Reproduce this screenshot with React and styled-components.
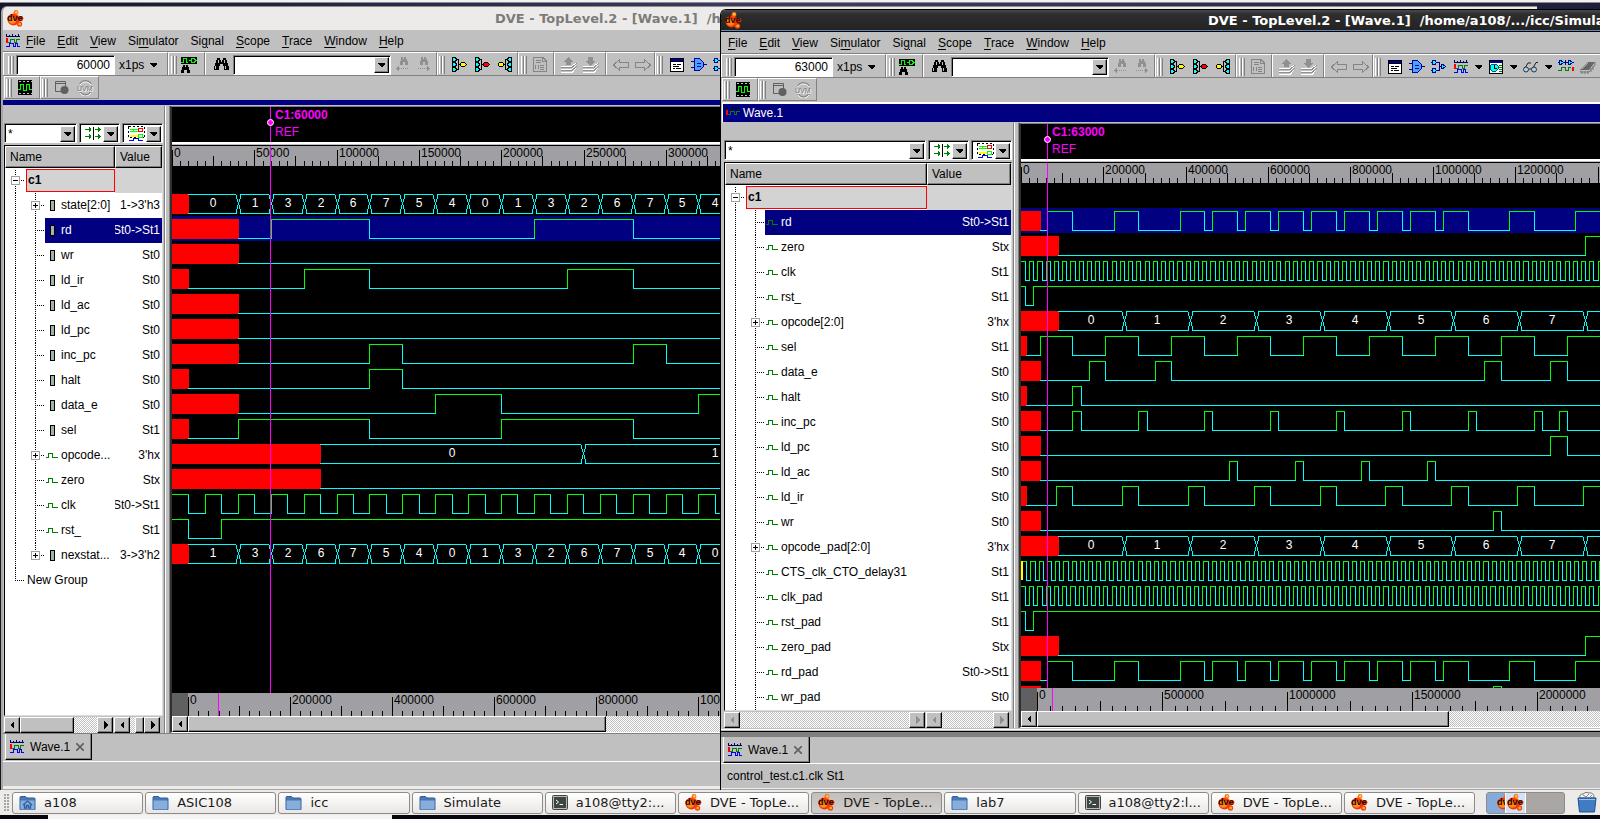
import React from "react";
import styled, { createGlobalStyle, css } from "styled-components";

const GlobalStyle = createGlobalStyle`
  *, *::before, *::after { box-sizing: border-box; }
  html, body { margin: 0; height: 100%; }
  body { background: #0a0c1c; overflow: hidden; font-family: "Liberation Sans", Arial, sans-serif; font-size: 12px; line-height: 16px; color: #000; }
  button, input, select { font: inherit; color: inherit; margin: 0; padding: 0; border: 0; border-radius: 0; background: none; }
  svg { display: block; flex: none; }
`;

/* ---------- desktop ---------- */
const Desktop = styled.div`
  display: flex;
  flex-direction: column;
  height: 100vh;
  overflow: hidden;
`;
const TopPanelEdge = styled.div`
  height: 3px;
  flex: none;
  background: #f4f2f1;
  border-bottom: 1px solid #8d8a88;
`;
const Stage = styled.div`
  position: relative;
  flex: 1;
  min-height: 0;
  background: linear-gradient(90deg, #14162c, #3b3d66 50%, #1e1f3d);
`;
const Window = styled.section`
  position: absolute;
  bottom: 0;
  display: flex;
  flex-direction: column;
  overflow: hidden;
  background: #c0c0c0;
  border-radius: 6px 0 0 0;
  ${(p) =>
    p.$active
      ? css`
          top: 6px;
          left: 45%;
          right: 0;
          border-left: 1px solid #000;
          border-top: 1px solid #000;
        `
      : css`
          top: 3px;
          left: 1px;
          width: 96%;
          border-left: 2px solid #a9a6a4;
          border-top: 1px solid #8f8d8b;
        `}
`;
const TitleBar = styled.header`
  display: flex;
  align-items: center;
  flex: none;
  padding-left: 4px;
  white-space: pre;
  font: bold 13px/16px "DejaVu Sans", sans-serif;
  ${(p) =>
    p.$active
      ? css`
          height: 22px;
          gap: 466px;
          color: #fff;
          background: linear-gradient(#4a4a4a, #2e2e2e 20%, #222);
          border-bottom: 1px solid #000;
          box-shadow: inset 0 -1px 0 #5f87b8;
        `
      : css`
          height: 23px;
          gap: 471px;
          color: #7c7b79;
          background: #edebe9;
        `}
`;
const MenuBar = styled.nav`
  display: flex;
  align-items: center;
  flex: none;
  height: 22px;
  padding-left: ${(p) => (p.$icon ? 3 : 1)}px;
  border-bottom: 1px solid #808080;
`;
const MenuButton = styled.button`
  padding: 0 6px;
  height: 20px;
  u { text-underline-offset: 2px; }
`;

/* ---------- toolbars ---------- */
const ToolRow = styled.div`
  display: flex;
  flex: none;
  height: 24px;
  overflow: hidden;
  padding-left: ${(p) => p.$inset || 0}px;
  border-bottom: ${(p) => (p.$line ? "1px solid #808080" : "0")};
`;
const Segment = styled.div`
  display: flex;
  align-items: center;
  flex: none;
  width: ${(p) => (p.$w ? p.$w + "px" : "auto")};
  height: 23px;
  gap: ${(p) => p.$gap || 4}px;
  padding-top: ${(p) => (p.$boxed ? 0 : 1)}px;
  padding-left: ${(p) => (p.$pad === undefined ? 2 : p.$pad)}px;
  border-left: 1px solid #fff;
  border-top: 1px solid #fff;
  border-right: 1px solid #808080;
  border-bottom: ${(p) => (p.$boxed ? "1px solid #808080" : "0")};
`;
const Handle = styled.span`
  flex: none;
  width: 6px;
  height: 18px;
  background: linear-gradient(90deg, #fff 1px, #c0c0c0 1px 2px, #808080 2px 3px, #fff 3px 4px, #c0c0c0 4px 5px, #808080 5px);
`;
const ToolButton = styled.button`
  display: flex;
  align-items: center;
  justify-content: center;
  flex: none;
  width: ${(p) => p.$w || 16}px;
  height: 20px;
`;
const Sunken = css`
  background: #fff;
  border: 1px solid #808080;
  border-right-color: #fff;
  border-bottom-color: #fff;
  box-shadow: inset 1px 1px 0 #000;
`;
const TimeInput = styled.input`
  ${Sunken};
  width: 99px;
  height: 20px;
  padding-right: 4px;
  text-align: right;
`;
const UnitSelect = styled.select`
  appearance: none;
  width: 26px;
  margin-left: 2px;
  outline: 0;
`;
const ComboBox = styled.span`
  ${Sunken};
  display: flex;
  align-items: center;
  flex: ${(p) => (p.$w ? "none" : "1")};
  width: ${(p) => (p.$w ? p.$w + "px" : "auto")};
  min-width: 0;
  height: 20px;
  padding: 1px 1px 0 3px;
`;
const ComboInput = styled.input`
  flex: 1;
  min-width: 0;
  width: 0;
  outline: 0;
  background: transparent;
`;
const ComboFace = styled.button`
  flex: 1;
  display: flex;
  justify-content: center;
`;
const ArrowButton = styled.button`
  display: flex;
  align-items: center;
  justify-content: center;
  flex: none;
  width: 15px;
  height: 16px;
  background: #c0c0c0;
  border: 1px solid #fff;
  border-right: 1px solid #000;
  border-bottom: 1px solid #000;
  box-shadow: inset -1px -1px 0 #808080;
`;

/* ---------- document window ---------- */
const DocTitle = styled.div`
  display: flex;
  align-items: center;
  flex: none;
  gap: 3px;
  padding-left: 3px;
  color: #fff;
  background: #000080;
  ${(p) =>
    p.$full
      ? css`
          height: 21px;
          margin-left: 1px;
          border-top: 2px solid #fff;
          border-left: 1px solid #fff;
          border-bottom: 1px solid #c0c0c0;
        `
      : css`
          height: 6px;
          border-bottom: 1px solid #c0c0c0;
        `}
`;
const Panel = styled.div`
  display: flex;
  flex: 1;
  min-height: 0;
  padding-left: ${(p) => p.$inset}px;
`;
const SignalPane = styled.div`
  display: flex;
  flex-direction: column;
  flex: none;
  width: ${(p) => p.$w}px;
`;
const FilterRow = styled.div`
  display: flex;
  flex: none;
  gap: 2px;
  height: 39px;
  padding-top: 17px;
`;
const SignalList = styled.div`
  flex: 1;
  min-height: 0;
  overflow: hidden;
  background: #fff;
  border-left: 1px solid #000;
  border-top: 1px solid #000;
  border-right: 1px solid #dcdcdc;
  border-bottom: 1px solid #dcdcdc;
`;
const SignalTable = styled.table`
  width: 100%;
  table-layout: fixed;
  border-collapse: separate;
  border-spacing: 0;
  td { padding: 0; }
`;
const HeadCell = styled.th`
  height: 22px;
  padding: 0 0 0 4px;
  text-align: left;
  font-weight: normal;
  background: #c0c0c0;
  border: 1px solid #fff;
  border-right-color: #000;
  border-bottom-color: #000;
  box-shadow: inset -1px -1px 0 #808080;
`;
const NameCell = styled.div`
  display: flex;
  height: 25px;
  overflow: hidden;
  white-space: nowrap;
`;
const Guide = styled.span`
  position: relative;
  flex: none;
  width: 20px;
  &::before {
    content: "";
    position: absolute;
    left: 10px;
    top: ${(p) => (p.$start ? 2 : 0)}px;
    bottom: ${(p) => (p.$end ? 12 : 0)}px;
    border-left: ${(p) => (p.$through ? "1px dotted #000" : "0")};
  }
  &::after {
    content: "";
    position: absolute;
    left: 12px;
    top: 12px;
    width: 7px;
    border-top: ${(p) => (p.$branch ? "1px dotted #000" : "0")};
  }
`;
const Expander = styled.button`
  position: absolute;
  z-index: 1;
  left: 6px;
  top: 8px;
  width: 9px;
  height: 9px;
  background: linear-gradient(#000, #000) center / 5px 1px no-repeat,
    ${(p) => (p.$open ? "" : "linear-gradient(#000, #000) center / 1px 5px no-repeat,")} #fff;
  border: 1px solid #a0a0a0;
`;
const NameBody = styled.span`
  display: flex;
  align-items: center;
  flex: 1;
  min-width: 0;
  gap: 3px;
  padding: 0 0 2px 1px;
  color: ${(p) => (p.$selected ? "#fff" : "#000")};
  background: ${(p) => (p.$selected ? "#000080" : "transparent")};
`;
const IconSlot = styled.span`
  display: flex;
  justify-content: center;
  flex: none;
  width: 12px;
  padding-top: 2px;
`;
const ValueBody = styled.div`
  display: flex;
  align-items: center;
  justify-content: flex-end;
  height: 25px;
  padding: 0 2px 2px 0;
  overflow: hidden;
  white-space: nowrap;
  color: ${(p) => (p.$selected ? "#fff" : "#000")};
  background: ${(p) => (p.$selected ? "#000080" : p.$group ? "#d3d3d3" : "transparent")};
`;
const GroupName = styled.span`
  flex: 1;
  margin: 1px 0 1px 1px;
  padding-left: 1px;
  font-weight: bold;
  line-height: 20px;
  background: #d3d3d3;
  border: 1px solid #f00;
`;
const PlainGroup = styled.span`
  padding-left: 2px;
  line-height: 25px;
`;
const Splitter = styled.div`
  flex: none;
  width: 7px;
  background: linear-gradient(90deg, #c0c0c0 1px, #808080 1px 2px, #fff 2px 3px, #c0c0c0 3px 6px, #808080 6px);
`;

/* ---------- scroll bars ---------- */
const ScrollRow = styled.div`
  display: flex;
  flex: none;
  gap: 1px;
  height: 17px;
  padding: 1px 3px 0 0;
`;
const ScrollTrack = styled.div`
  display: flex;
  flex: ${(p) => (p.$w ? "none" : p.$fixed ? "none" : "1")};
  width: ${(p) => (p.$w ? p.$w + "px" : "auto")};
  min-width: 0;
  height: 16px;
  background: repeating-conic-gradient(#fff 0 25%, #c0c0c0 0 50%) 0 0 / 2px 2px;
`;
const ScrollButton = styled(ArrowButton)`
  width: 16px;
  margin-left: ${(p) => (p.$end ? "auto" : "0")};
`;
const Thumb = styled.span`
  flex: none;
  width: ${(p) => p.$w}px;
  margin-left: ${(p) => (p.$end ? "auto" : "0")};
  & + ${ScrollButton} { margin-left: ${(p) => (p.$end ? "0" : "auto")}; }
  background: #c0c0c0;
  border: 1px solid #fff;
  border-right-color: #000;
  border-bottom-color: #000;
  box-shadow: inset -1px -1px 0 #808080;
`;

/* ---------- waves ---------- */
const WavePane = styled.div`
  display: flex;
  flex-direction: column;
  flex: 1;
  min-width: 0;
  border-left: 2px solid #303030;
  border-top: 1px solid #808080;
  border-bottom: 1px solid #fff;
  background: #000;
`;
const MarkerStrip = styled.div`
  flex: none;
  height: 35px;
  overflow: hidden;
`;
const Divider = styled.div`
  flex: none;
  height: 4px;
  background: linear-gradient(#fff 2px, #c0c0c0 2px 3px, #000 3px);
`;
const RulerStrip = styled.div`
  flex: none;
  height: ${(p) => p.$h}px;
  overflow: hidden;
  background: #a0a0a4;
`;
const WaveCanvas = styled.div`
  flex: 1;
  min-height: 0;
  overflow: hidden;
`;
const Drawing = styled.svg`
  width: 100%;
  height: 100%;
  font: 12px "Liberation Sans", Arial, sans-serif;
`;

/* ---------- lower bars ---------- */
const PanelFoot = styled.div`
  flex: none;
  height: ${(p) => (p.$active ? 9 : 1)}px;
  background: ${(p) =>
    p.$active ? "linear-gradient(#c0c0c0 1px, #fff 1px 2px, #c0c0c0 2px 3px, #000 3px 4px, #808080 4px)" : "#808080"};
`;
const TabBar = styled.div`
  flex: none;
  height: ${(p) => (p.$active ? 26 : 27)}px;
  padding-left: 2px;
`;
const Tab = styled.button`
  display: flex;
  align-items: center;
  gap: 6px;
  width: 87px;
  height: 26px;
  padding-left: 4px;
  border-left: 1px solid #fff;
  border-right: 1px solid #000;
  border-bottom: 1px solid #000;
  box-shadow: inset -1px -1px 0 #808080;
`;
const StatusBar = styled.footer`
  flex: none;
  height: 25px;
  padding: 4px 0 0 6px;
  border-top: 1px solid #fff;
`;
const WindowFoot = styled.div`
  flex: none;
  height: ${(p) => (p.$active ? 2 : 4)}px;
  background: #edebe9;
  border-bottom: 1px solid #a9a6a4;
`;

/* ---------- task bar ---------- */
const TaskBar = styled.footer`
  display: flex;
  align-items: center;
  flex: none;
  height: 25px;
  padding: 0 3px 0 4px;
  background: #edebe9;
`;
const Grip = styled.span`
  flex: none;
  width: 6px;
  height: 17px;
  margin-right: 2px;
  background: radial-gradient(circle at 1px 1px, #a8a5a2 1px, transparent 1px) 0 0 / 3px 3px;
`;
const TaskList = styled.div`
  display: flex;
  flex: 1;
  min-width: 0;
  gap: 2px;
`;
const TaskButton = styled.button`
  display: flex;
  align-items: center;
  flex: 1 1 0;
  min-width: 0;
  gap: 8px;
  height: 22px;
  padding-left: 6px;
  overflow: hidden;
  white-space: nowrap;
  color: #1a1a1a;
  font: 13px/18px "DejaVu Sans", sans-serif;
  border: 1px solid #8f8b88;
  border-radius: 3px;
  background: ${(p) => (p.$active ? "linear-gradient(#c2bfbc, #d0cdca)" : "linear-gradient(#fff, #e9e7e5)")};
`;
const Pager = styled.div`
  display: flex;
  flex: none;
  width: 79px;
  height: 22px;
  margin: 0 12px 0 11px;
  overflow: hidden;
  border: 1px solid #8f8b88;
  border-radius: 3px;
  background: #aaa6a3;
`;
const PagerDesk = styled.button`
  display: flex;
  width: 39px;
  border-right: 1px solid #fff;
`;
const PagerPart = styled.span`
  display: flex;
  align-items: center;
  align-self: stretch;
  flex: ${(p) => (p.$behind ? "0 0 18px" : "1")};
  padding-left: ${(p) => (p.$behind ? 10 : 1)}px;
  overflow: hidden;
  background: ${(p) => (p.$behind ? "#86abd9" : "#d3e2f5")};
  border-left: ${(p) => (p.$behind ? "0" : "1px solid #fff")};
`;
const ScreenEdge = styled.div`
  flex: none;
  height: 4px;
  padding: 0 75.5% 0 3%;
  background: #05070d;
  &::before { content: ""; display: block; height: 4px; background: #f4f4f4; }
`;

/* ---------- icons ---------- */
const Pix = ({ w = 16, h = 16, children }) => (
  <svg width={w} height={h} viewBox={`0 0 ${w} ${h}`} shapeRendering="crispEdges" fill="none" aria-hidden="true">
    {children}
  </svg>
);
const DveIcon = () => (
  <svg width="17" height="17" viewBox="0 0 17 17" aria-hidden="true">
    <circle cx="6.5" cy="9.5" r="6" fill="#f5350a" />
    <circle cx="5.5" cy="10" r="3.8" fill="#ff8a14" />
    <circle cx="9" cy="2.5" r="2.4" fill="#ff6a10" />
    <circle cx="9.3" cy="2.2" r="1.2" fill="#ffd23c" />
    <circle cx="14" cy="8.5" r="2.4" fill="#f0300a" />
    <circle cx="12.5" cy="14" r="2.7" fill="#f5450a" />
    <circle cx="12.7" cy="14" r="1.3" fill="#ffb428" />
    <text x="0" y="11" fontSize="9" fontWeight="bold" fontFamily="Liberation Sans, sans-serif" fill="#2a0800">dve</text>
  </svg>
);
const WaveIcon = ({ dim }) => (
  <Pix w={14} h={14}>
    <path d="M0 2.5H14M.5 0V2M3.5 1V2M6.5 0V2M9.5 1V2M12.5 0V2" stroke={dim ? "#000050" : "#000060"} />
    <path d="M0 4H2V9H0z" fill="#f00" />
    <path d="M2 8.5H4.5V5.5H8.5V8.5H10.5V5.5H14" stroke="#008000" />
    <path d="M0 12.5H3.5V9.5H7.5V12.5H9.5V9.5H11.5V12.5H13.5" stroke={dim ? "#0000b0" : "#00f"} />
  </Pix>
);
const binoc = "M3 0H6V2H7V4H8V2H9V0H12V2H13V5H14V8H15V12H10V8H9V6H6V8H5V12H0V8H1V5H2V2H3z";
const Binoculars = () => (
  <Pix w={15} h={13}>
    <path d={binoc} fill="#000" />
    <path d="M1.5 8V11M4.5 2V5M11.5 8V11M10.5 2V5" stroke="#c0c0c0" />
  </Pix>
);
const FindSignal = () => (
  <Pix>
    <path d="M0 0H16V7H0z" fill="#000" />
    <path d="M0 5.5H2.5V1.5H5.5V5.5H7M8 3.5H10M10.5 1V6M10 1.5H13L15 3.5L13 5.5H10" stroke="#0f0" />
    <path d="M2 8H4V10H5V8H7V10H8V13H9V16H6V13H3V16H0V13H1V10H2z" fill="#000" />
  </Pix>
);
const FindStep = ({ back }) => (
  <Pix>
    <path d="M6 0H8V2H9V0H11V2H12V4H13V8H10V5H8V8H5V4H6z" fill="#909090" />
    {back ? (
      <path d="M1 11.5H5M6 11.5H7M8 11.5H9M10 11.5H11M12 11.5H13M3.5 9V14M2.5 10V13" stroke="#909090" />
    ) : (
      <path d="M3 11.5H4M5 11.5H6M7 11.5H8M9 11.5H10M11 11.5H15M12.5 9V14M13.5 10V13" stroke="#909090" />
    )}
  </Pix>
);
const LoadIcon = ({ color, flip }) => (
  <Pix>
    <g transform={flip ? "translate(16 0) scale(-1 1)" : undefined}>
      <path d="M1.5 .5H4L5.5 2V3L4 4.5H1.5zM1.5 5.5H4L5.5 7V8L4 9.5H1.5zM1.5 10.5H4L5.5 12V13L4 14.5H1.5z" fill="#0ff" stroke="#000" />
      <path d="M5 2.5H7.5V12.5H5M7 7.5H10" stroke="#000" />
      <path d="M10.5 5.5H13.5L15 7V8L13.5 9.5H10.5L9.5 8V7z" fill={color} stroke="#000" />
    </g>
  </Pix>
);
const DocIcon = () => (
  <Pix w={14} h={15}>
    <path d="M.5 .5H10L13.5 4V14.5H.5zM9.5 1V4.5H13" stroke="#858585" />
    <path d="M3 3.5H8M3 5.5H8M7 8.5H11M7 10.5H11M7 12.5H11M2.5 8V12M5.5 8V12" stroke="#858585" />
  </Pix>
);
const StackIcon = ({ down }) => (
  <Pix>
    <path d={down ? "M5 0H10V4H13L7.5 9L2 4H5z" : "M7.5 0L13 5H10V8H5V5H2z"} fill="#909090" />
    <path d="M0 9.5H11L15 6M0 12.5H11L15 8M0 15.5H11L15 11" stroke="#fff" />
    <path d="M0 10.5H11L16 6M0 13.5H11L16 9" stroke="#909090" />
  </Pix>
);
const BigArrow = ({ back }) => (
  <Pix>
    <path transform={back ? undefined : "translate(16 0) scale(-1 1)"} d="M.5 8L6.5 2.5V5.5H15.5V10.5H6.5V13.5z" stroke="#858585" />
  </Pix>
);
const ListIcon = () => (
  <Pix w={14} h={14}>
    <path d="M.5 .5H13.5V13.5H.5z" fill="#fff" stroke="#000" />
    <path d="M1 1H13V3H1z" fill="#0000a0" />
    <path d="M1 3.5H13M3 6.5H6M7 6.5H11M3 8.5H9M3 10.5H5M6 10.5H11" stroke="#000" />
  </Pix>
);
const GateIcon = () => (
  <Pix>
    <path d="M0 4.5H3M0 10.5H3M13 7.5H16" stroke="#000090" />
    <path d="M3.5 1.5H8.5L12.5 5.5V9.5L8.5 13.5H3.5z" fill="#4aa4ff" stroke="#0000a0" />
    <path d="M6 6.5H10M6 9.5H10" stroke="#0000a0" />
  </Pix>
);
const PathIcon = () => (
  <Pix>
    <path d="M0 3.5H8V7.5H11M0 11.5H8V7.5" stroke="#000090" />
    <path d="M1.5 1.5H4L5.5 3.5L4 5.5H1.5zM1.5 9.5H4L5.5 11.5L4 13.5H1.5zM10.5 5.5H12L14.5 7.5L12 9.5H10.5z" fill="#0ff" stroke="#000090" />
  </Pix>
);
const ClockList = () => (
  <Pix w={14} h={14}>
    <path d="M.5 .5H13.5V13.5H.5z" fill="#fff" stroke="#000" />
    <path d="M1 1H13V3H1z" fill="#0000a0" />
    <path d="M3 4H7L9 6V9L7 11H3L1 9V6z" fill="#0ff" stroke="#006060" />
    <path d="M5.5 5V8H8" stroke="#000" />
    <path d="M10 5.5H13M10 7.5H13M10 9.5H13M10 11.5H13" stroke="#008000" />
  </Pix>
);
const Glasses = () => (
  <svg width="16" height="12" viewBox="0 0 16 12" fill="none" aria-hidden="true">
    <path d="M2 7L5 2H8M10 7L13 1.500H15M6 8H9" stroke="#202020" />
    <circle cx="3" cy="8.500" r="2.500" fill="#a8cdf5" stroke="#333" />
    <circle cx="11" cy="8.500" r="2.500" fill="#a8cdf5" stroke="#333" />
  </svg>
);
const CompareIcon = () => (
  <Pix>
    <path d="M0 3.500H16M7.500 1V6" stroke="#000090" />
    <path d="M1.500 1.500H3L5.500 3.500L3 5.500H1.500zM10.500 1.500H12L14.500 3.500L12 5.500H10.500z" fill="#0ff" stroke="#000090" />
    <path d="M0 11.500H3.500V8.500H7.500V11.500H10.500V8.500H13" stroke="#008000" />
    <path d="M14 8H16V12H14z" fill="#f00" />
  </Pix>
);
const ChipIcon = () => (
  <svg width="16" height="14" viewBox="0 0 16 14" fill="none" aria-hidden="true">
    <path d="M0 10L8 2H15L9 10z" fill="#666" />
    <path d="M0 10V12H9L15 5V2M2 11V14M5 11V14M8 11V14M11 8V12M13 6V10" stroke="#777" />
    <path d="M2 9L8 3" stroke="#a8a8a8" />
  </svg>
);
const FilmIcon = () => (
  <Pix w={14} h={15}>
    <path d="M0 0H14V15H0z" fill="#000" />
    <path d="M0 9.500H2.500V4.500H5.500V10.500H8.500V4.500H11.500V9.500H14" stroke="#0f0" />
    <path d="M1 1.500H14M1 13.500H14" stroke="#c0c0c0" strokeDasharray="2 2" />
  </Pix>
);
const WindowBall = () => (
  <svg width="14" height="14" viewBox="0 0 14 14" fill="none" aria-hidden="true">
    <path d="M.5 .5H10.500V10.500H.5zM1 2.500H10" stroke="#606060" />
    <circle cx="9.500" cy="9" r="4" fill="#606060" />
  </svg>
);
const UvmIcon = () => (
  <svg width="17" height="16" viewBox="0 0 17 16" fill="none" aria-hidden="true">
    <path d="M3 4A6.500 6.500 0 0 1 14 4M14 12A6.500 6.500 0 0 1 3 12" stroke="#8a8a8a" strokeWidth="2" />
    <path d="M3 5A6.500 6.500 0 0 1 14 5M14 13A6.500 6.500 0 0 1 3 13" stroke="#fff" />
    <text x="1" y="12" fontSize="7" fontFamily="Liberation Sans, sans-serif" fill="#fff">UVM</text>
    <text x="0" y="11" fontSize="7" fontFamily="Liberation Sans, sans-serif" fill="#777">UVM</text>
  </svg>
);
const Down = () => (
  <Pix w={7} h={4}><path d="M0 0H7V1L4 4H3L0 1z" fill="#000" /></Pix>
);
const Tri = ({ right, off }) => (
  <Pix w={5} h={8}>
    <path d={right ? "M1 0L5 4L1 8z" : "M4 0L0 4L4 8z"} fill={off ? "#909090" : "#000"} />
  </Pix>
);
const RadixIcon = () => (
  <Pix w={17} h={13}>
    <path d="M0 2.500H6M0 9.500H6M10 2.500H16M10 9.500H16M4.500 0V5M5.500 1V4M4.500 7V12M5.500 8V11M13.500 0V5M14.500 1V4M13.500 7V12M14.500 8V11" stroke="#008000" />
    <path d="M8.500 0V13" stroke="#000" />
  </Pix>
);
const GroupIcon = () => (
  <Pix w={17} h={15}>
    <path d="M.5 .5H16.500V11.500H.5z" stroke="#000" strokeDasharray="2 2" />
    <path d="M2 3.500H11M2 5.500H11M5.500 3V6" stroke="#0f0" />
    <path d="M2 9.500H10" stroke="#ff0" strokeWidth="2" />
    <path d="M10.500 2.500H14.500V5.500H10.500z" stroke="#f00" />
    <path d="M10.500 8.500H14.500V11H10.500z" stroke="#0f0" />
    <path d="M1 14.500H5.500V12.500H10.500V14.500H15" stroke="#00f" />
  </Pix>
);
const RegIcon = () => (
  <Pix w={5} h={11}><path d="M.5 .5H4.500V10.500H.5z" fill="#a0b4a8" stroke="#000" /></Pix>
);
const NetIcon = () => (
  <Pix w={12} h={6}><path d="M0 4.500H2.500V.5H6.500V4.500H12" stroke="#008000" /></Pix>
);
const CloseIcon = () => (
  <svg width="8" height="8" viewBox="0 0 8 8" aria-hidden="true"><path d="M0 0L8 8M8 0L0 8" stroke="#606060" strokeWidth="1.600" /></svg>
);
const FolderIcon = ({ home }) => (
  <svg width="17" height="16" viewBox="0 0 17 16" fill="none" aria-hidden="true">
    <path d="M1 4V2.500Q1 1.500 2 1.500H6.500L8 3H15Q16 3 16 4V14.500H1z" fill="#4a78b4" stroke="#2f5f9f" />
    <path d="M1.500 5.500H15.500V14.500H1.500z" fill="#86aedd" />
    {home && <path d="M4 10L8.500 6L13 10M5.500 9.500V13H7.500V10.500H9.500V13H11.500V9.500" stroke="#2f5f9f" strokeWidth="1.300" />}
  </svg>
);
const TermIcon = () => (
  <svg width="16" height="15" viewBox="0 0 16 15" fill="none" aria-hidden="true">
    <rect x=".5" y=".5" width="15" height="14" rx="1" fill="#b9bab6" stroke="#444" />
    <rect x="2" y="2" width="12" height="11" fill="#3c4744" />
    <path d="M4 5L6.500 7L4 9M7.500 9.500H11" stroke="#fff" />
  </svg>
);
const TrashIcon = () => (
  <svg width="20" height="21" viewBox="0 0 20 21" fill="none" aria-hidden="true">
    <path d="M3 6Q2 2 6 2Q9 -1 12 1Q17 0 17 6z" fill="#f2f4f6" stroke="#777" />
    <path d="M6 3L9 5L12 2M13 5L15 3" stroke="#888" />
    <path d="M1 6H19L17.500 20H2.500z" fill="#3f7cc4" stroke="#1e4f8c" />
    <path d="M2 7.500H18" stroke="#9cc4f0" />
  </svg>
);

/* ---------- data ---------- */
const clock = (fall, end) => {
  const t = [];
  for (let x = fall; x < end; x += 10) t.push(x);
  return t;
};
/* x: end of the unknown span; edges: toggle times after it; hi: level after the unknown span */
const stateBus = [40, 60, 80, 100, 120, 140, 160, 180, 200, 220, 240, 260, 280, 300, 320, 340];
const leftSignals = [
  { name: "state[2:0]", value: "1->3'h3", kind: "reg", open: true, x: 10, bus: stateBus, labels: "0132675401326754" },
  { name: "rd", value: "St0->St1", kind: "reg", selected: true, x: 40, edges: [60, 120, 220, 280] },
  { name: "wr", value: "St0", kind: "reg", x: 40, edges: [] },
  { name: "ld_ir", value: "St0", kind: "reg", x: 10, edges: [80, 120, 240, 280] },
  { name: "ld_ac", value: "St0", kind: "reg", x: 40, edges: [] },
  { name: "ld_pc", value: "St0", kind: "reg", x: 40, edges: [] },
  { name: "inc_pc", value: "St0", kind: "reg", x: 40, edges: [120, 140, 280, 300] },
  { name: "halt", value: "St0", kind: "reg", x: 10, edges: [120, 140] },
  { name: "data_e", value: "St0", kind: "reg", x: 40, edges: [160, 200, 320, 360] },
  { name: "sel", value: "St1", kind: "reg", x: 10, edges: [40, 120, 200, 280] },
  { name: "opcode...", value: "3'hx", kind: "net", open: true, x: 90, bus: [250, 410], labels: "01" },
  { name: "zero", value: "Stx", kind: "net", x: 90, edges: [] },
  { name: "clk", value: "St0->St1", kind: "net", x: 0, hi: true, edges: clock(10, 1000) },
  { name: "rst_", value: "St1", kind: "net", x: 0, hi: true, edges: [10, 30] },
  { name: "nexstat...", value: "3->3'h2", kind: "reg", open: true, x: 10, bus: stateBus, labels: "1326754013267540" },
];

const rdEdges = [63, 125, 225, 285, 385, 445, 465, 525, 545, 605, 625, 685, 705, 765, 785, 845, 865, 925, 945, 1005, 1025, 1085, 1185, 1245, 1345, 1405];
const opBus = [250, 410, 570, 730, 890, 1050, 1210, 1370, 1530];
const rightSignals = [
  { name: "rd", value: "St0->St1", selected: true, x: 45, edges: rdEdges },
  { name: "zero", value: "Stx", x: 90, edges: [1370] },
  { name: "clk", value: "St1", x: 0, hi: true, edges: clock(10, 3000) },
  { name: "rst_", value: "St1", x: 0, hi: true, edges: [10, 30] },
  { name: "opcode[2:0]", value: "3'hx", open: true, x: 90, bus: opBus, labels: "012345670" },
  { name: "sel", value: "St1", x: 13, edges: [45, 125, 205, 285, 365, 445, 525, 605, 685, 765, 845, 925, 1005, 1085, 1165, 1245, 1325, 1405] },
  { name: "data_e", value: "St0", x: 45, edges: [165, 205, 325, 365, 1125, 1165, 1285, 1325] },
  { name: "halt", value: "St0", x: 13, edges: [125, 145] },
  { name: "inc_pc", value: "St0", x: 47, edges: [125, 145, 285, 305, 445, 465, 605, 625, 765, 785, 925, 945, 1085, 1105, 1246, 1266, 1306, 1326] },
  { name: "ld_pc", value: "St0", x: 45, edges: [1285, 1325] },
  { name: "ld_ac", value: "St0", x: 47, edges: [505, 525, 665, 685, 825, 845, 985, 1005] },
  { name: "ld_ir", value: "St0", x: 13, edges: [85, 125, 245, 285, 405, 445, 565, 605, 725, 765, 885, 925, 1045, 1085, 1205, 1245, 1365, 1405] },
  { name: "wr", value: "St0", x: 47, edges: [1146, 1166] },
  { name: "opcode_pad[2:0]", value: "3'hx", open: true, x: 90, bus: opBus, labels: "012345670" },
  { name: "CTS_clk_CTO_delay31", value: "St1", x: 0, hi: true, glitch: true, edges: clock(13, 3000) },
  { name: "clk_pad", value: "St1", x: 0, hi: true, edges: clock(10, 3000) },
  { name: "rst_pad", value: "St1", x: 0, hi: true, edges: [10, 30] },
  { name: "zero_pad", value: "Stx", x: 90, edges: [1370] },
  { name: "rd_pad", value: "St0->St1", x: 45, edges: rdEdges },
  { name: "wr_pad", value: "St0", x: 47, edges: [1146, 1166] },
];

const windows = {
  left: {
    time: "60000", cursor: 98, scale: 1.645, signals: leftSignals, newGroup: true,
    nameCol: 110, valueCol: 47, pxMajor: 82.33, step: 50000, globalMajor: 102,
    globalStep: 200000, globalCursor: 46, thumb: 418,
  },
  right: {
    time: "63000", cursor: 26, scale: 0.4118, signals: rightSignals, active: true,
    nameCol: 202, valueCol: 84, pxMajor: 82.36, step: 200000, globalMajor: 125,
    globalStep: 500000, globalCursor: 31, thumb: 412, status: "control_test.c1.clk St1",
  },
};

/* ---------- drawings ---------- */
const FAR = 2600;
function SignalTrace({ s, scale, y }) {
  const px = (t) => Math.round(t * scale);
  const hi = y + 3.5;
  const lo = y + 22.5;
  const x0 = px(s.x);
  const parts = [];
  if (s.x) parts.push(<rect key="x" x="0" y={y + 3} width={x0 + 1} height="20" fill="#f00" />);
  if (s.bus) {
    let d = "";
    let a = x0;
    s.bus.forEach((t, i) => {
      const b = px(t);
      const from = i ? a + 2 : a;
      d += `M${from} ${hi}H${b - 2}M${from} ${lo}H${b - 2}`;
      d += `M${b - 1.5} ${hi}V${hi + 3}L${b + 0.5} ${hi + 9}L${b - 1.5} ${lo - 3}V${lo}`;
      d += `M${b + 2.5} ${hi}V${hi + 3}L${b + 0.5} ${hi + 9}L${b + 2.5} ${lo - 3}V${lo}`;
      parts.push(
        <text key={i} x={Math.round((a + b) / 2)} y={y + 16} textAnchor="middle" fill="#fff">{s.labels[i]}</text>
      );
      a = b;
    });
    parts.push(<path key="b" d={d} stroke="#0ff" fill="none" shapeRendering="crispEdges" />);
  } else {
    let up = "";
    let down = "";
    let level = !!s.hi;
    let a = x0;
    [...s.edges, null].forEach((t) => {
      const b = t === null ? FAR : px(t);
      if (level) up += `M${a} ${hi}H${b + 1}`;
      else down += `M${a} ${lo}H${b + 1}`;
      if (t !== null) {
        const edge = `M${b + 0.5} ${hi}V${lo}`;
        if (level) down += edge;
        else up += edge;
      }
      level = !level;
      a = b;
    });
    parts.push(<path key="u" d={up} stroke="#0f0" fill="none" shapeRendering="crispEdges" />);
    parts.push(<path key="d" d={down} stroke="#0ff" fill="none" shapeRendering="crispEdges" />);
  }
  if (s.glitch) parts.push(<rect key="g" x="0" y={y + 3} width="2" height="19" fill="#ff0" />);
  return <g>{parts}</g>;
}

function Waves({ w }) {
  return (
    <Drawing role="img" aria-label="Waveforms">
      {w.signals.map((s, i) => (
        <g key={s.name}>
          {s.selected && <rect x="0" y={25 + i * 25} width="100%" height="25" fill="#000080" />}
          <SignalTrace s={s} scale={w.scale} y={25 + i * 25} />
        </g>
      ))}
      <rect x={w.cursor} y="0" width="1" height="100%" fill="#f0f" />
    </Drawing>
  );
}

function Ruler({ major, step, origin = 0, height, cursor }) {
  const ticks = [];
  const labels = [];
  for (let i = 0; i < 200; i++) {
    const x = Math.round(origin + (i * major) / 10);
    const len = i % 10 === 0 ? height - 4 : i % 5 === 0 ? 10 : 5;
    ticks.push(`M${x + 0.5} ${height - len}V${height}`);
    if (i % 10 === 0) labels.push(<text key={i} x={x + 2} y={11}>{(i / 10) * step}</text>);
  }
  return (
    <Drawing role="img" aria-label="Time ruler">
      {origin > 0 && <rect x="0" y="0" width={origin} height={height} fill="#606060" />}
      <path d={ticks.join("")} stroke="#000" shapeRendering="crispEdges" />
      {labels}
      <rect x={cursor} y="0" width="1" height={height} fill="#f0f" />
    </Drawing>
  );
}

/* ---------- assemblies ---------- */
const menus = [["", "F", "ile"], ["", "E", "dit"], ["", "V", "iew"], ["Si", "m", "ulator"], ["Si", "g", "nal"], ["", "S", "cope"], ["", "T", "race"], ["", "W", "indow"], ["", "H", "elp"]];

const Tool = ({ label, w, children }) => <ToolButton aria-label={label} $w={w}>{children}</ToolButton>;

function Toolbars({ time }) {
  return (
    <>
      <ToolRow $line>
        <Segment $w={165} $pad={4} $gap={2}>
          <Handle />
          <TimeInput aria-label="Time" defaultValue={time} />
          <UnitSelect aria-label="Time unit"><option>x1ps</option></UnitSelect>
          <Tool label="Choose unit" w={13}><Down /></Tool>
        </Segment>
        <Segment $w={37}><Handle /><Tool label="Find signal"><FindSignal /></Tool></Segment>
        <Segment $w={232} $pad={7}>
          <Tool label="Find"><Binoculars /></Tool>
          <ComboBox $w={158}><ComboInput aria-label="Search text" /><ArrowButton aria-label="Search history"><Down /></ArrowButton></ComboBox>
          <Tool label="Find previous"><FindStep back /></Tool>
          <Tool label="Find next"><FindStep /></Tool>
        </Segment>
        <Segment $w={81} $pad={1} $gap={5}>
          <Handle />
          <Tool label="Trace drivers" w={18}><LoadIcon color="#ff0" /></Tool>
          <Tool label="Trace active drivers" w={18}><LoadIcon color="#f00" /></Tool>
          <Tool label="Trace loads" w={18}><LoadIcon color="#ff0" flip /></Tool>
        </Segment>
        <Segment $w={36} $gap={5}><Handle /><Tool label="Source"><DocIcon /></Tool></Segment>
        <Segment $w={52} $pad={6} $gap={6}><Tool label="Push up"><StackIcon /></Tool><Tool label="Push down"><StackIcon down /></Tool></Segment>
        <Segment $w={49} $pad={6} $gap={6}><Tool label="Back"><BigArrow back /></Tool><Tool label="Forward"><BigArrow /></Tool></Segment>
        <Segment $pad={1} $gap={6}>
          <Handle />
          <Tool label="List"><ListIcon /></Tool>
          <Tool label="Schematic"><GateIcon /></Tool>
          <Tool label="Path schematic"><PathIcon /></Tool>
          <Tool label="Wave"><WaveIcon /></Tool>
          <Tool label="Wave menu" w={7}><Down /></Tool>
          <Tool label="List view"><ClockList /></Tool>
          <Tool label="List view menu" w={7}><Down /></Tool>
          <Tool label="Watch"><Glasses /></Tool>
          <Tool label="Watch menu" w={7}><Down /></Tool>
          <Tool label="Compare"><CompareIcon /></Tool>
          <Tool label="Memory"><ChipIcon /></Tool>
          <Tool label="More" w={40} />
        </Segment>
      </ToolRow>
      <ToolRow $inset={1}>
        <Segment $w={36} $pad={1} $gap={5} $boxed><Handle /><Tool label="Signals"><FilmIcon /></Tool></Segment>
        <Segment $w={59} $gap={6} $pad={1} $boxed>
          <Handle />
          <Tool label="Window settings"><WindowBall /></Tool>
          <Tool label="UVM" w={18}><UvmIcon /></Tool>
        </Segment>
      </ToolRow>
    </>
  );
}

function Signals({ w }) {
  const last = w.signals.length - 1;
  return (
    <SignalList>
      <SignalTable>
        <colgroup><col style={{ width: w.nameCol }} /><col /></colgroup>
        <thead><tr><HeadCell>Name</HeadCell><HeadCell>Value</HeadCell></tr></thead>
        <tbody>
          <tr>
            <td><NameCell><Guide $through $start $branch><Expander $open aria-label="Collapse c1" /></Guide><GroupName>c1</GroupName></NameCell></td>
            <td><ValueBody $group /></td>
          </tr>
          {w.signals.map((s, i) => (
            <tr key={s.name}>
              <td>
                <NameCell>
                  <Guide $through />
                  <Guide $through $branch $end={w.newGroup && i === last}>
                    {s.open && <Expander aria-label={`Expand ${s.name}`} />}
                  </Guide>
                  <NameBody $selected={s.selected}>
                    <IconSlot>{s.kind === "reg" ? <RegIcon /> : <NetIcon />}</IconSlot>
                    {s.name}
                  </NameBody>
                </NameCell>
              </td>
              <td><ValueBody $selected={s.selected}>{s.value}</ValueBody></td>
            </tr>
          ))}
          {w.newGroup && (
            <tr><td><NameCell><Guide $through $branch $end /><PlainGroup>New Group</PlainGroup></NameCell></td><td /></tr>
          )}
        </tbody>
      </SignalTable>
    </SignalList>
  );
}

const ArrowCombo = ({ label, icon }) => (
  <ComboBox $w={41}>
    <ComboFace aria-label={label}>{icon}</ComboFace>
    <ArrowButton aria-label={`${label} menu`}><Down /></ArrowButton>
  </ComboBox>
);

function WaveWindow({ w }) {
  const off = w.active;
  return (
    <Window $active={w.active}>
      <TitleBar $active={w.active}><DveIcon />{"DVE - TopLevel.2 - [Wave.1]  /home/a108/.../icc/Simulate"}</TitleBar>
      <MenuBar $icon={!w.active}>
        {!w.active && <WaveIcon />}
        {menus.map(([a, k, b]) => <MenuButton key={k + b}>{a}<u>{k}</u>{b}</MenuButton>)}
      </MenuBar>
      <Toolbars time={w.time} />
      <DocTitle $full={w.active}>{w.active && <><WaveIcon dim />Wave.1</>}</DocTitle>
      <Panel $inset={w.active ? 3 : 1}>
        <SignalPane $w={w.nameCol + w.valueCol + 2}>
          <FilterRow>
            <ComboBox><ComboInput aria-label="Filter" defaultValue="*" /><ArrowButton aria-label="Filter history"><Down /></ArrowButton></ComboBox>
            <ArrowCombo label="Radix" icon={<RadixIcon />} />
            <ArrowCombo label="Signal groups" icon={<GroupIcon />} />
          </FilterRow>
          <Signals w={w} />
          <ScrollRow>
            <ScrollTrack $w={w.nameCol - 1}>
              <ScrollButton aria-label="Scroll names left"><Tri off={off} /></ScrollButton>
              {!off && <Thumb $w={54} />}
              <ScrollButton $end aria-label="Scroll names right"><Tri right off={off} /></ScrollButton>
            </ScrollTrack>
            <ScrollTrack>
              <ScrollButton aria-label="Scroll values left"><Tri off={off} /></ScrollButton>
              {!off && <Thumb $w={9} $end />}
              <ScrollButton $end aria-label="Scroll values right"><Tri right off={off} /></ScrollButton>
            </ScrollTrack>
          </ScrollRow>
        </SignalPane>
        <Splitter />
        <WavePane>
          <MarkerStrip>
            <Drawing role="img" aria-label="Cursor">
              <rect x={w.cursor} y="0" width="1" height="35" fill="#f0f" />
              <circle cx={w.cursor + 0.5} cy="15.500" r="3" fill="#f0f" stroke="#fff" />
              <text x={w.cursor + 5} y="12" fill="#f0f" fontWeight="bold">C1:{w.time}</text>
              <text x={w.cursor + 5} y="29" fill="#f0f">REF</text>
            </Drawing>
          </MarkerStrip>
          <Divider />
          <RulerStrip $h={20}><Ruler major={w.pxMajor} step={w.step} height={20} cursor={w.cursor} /></RulerStrip>
          <WaveCanvas><Waves w={w} /></WaveCanvas>
          <RulerStrip $h={23}><Ruler major={w.globalMajor} step={w.globalStep} origin={16} height={23} cursor={w.globalCursor} /></RulerStrip>
          <ScrollTrack $fixed>
            <ScrollButton aria-label="Scroll time left"><Tri /></ScrollButton>
            <Thumb $w={w.thumb} />
          </ScrollTrack>
        </WavePane>
      </Panel>
      <PanelFoot $active={w.active} />
      <TabBar $active={w.active}><Tab><WaveIcon />Wave.1<CloseIcon /></Tab></TabBar>
      <StatusBar>{w.status}</StatusBar>
      <WindowFoot $active={w.active} />
    </Window>
  );
}

const tasks = [
  ["a108", <FolderIcon home />], ["ASIC108", <FolderIcon />], ["icc", <FolderIcon />], ["Simulate", <FolderIcon />],
  ["a108@tty2:...", <TermIcon />], ["DVE - TopLe...", <DveIcon />], ["DVE - TopLe...", <DveIcon />, true], ["lab7", <FolderIcon />],
  ["a108@tty2:l...", <TermIcon />], ["DVE - TopLe...", <DveIcon />], ["DVE - TopLe...", <DveIcon />],
];

export default function App() {
  return (
    <>
      <GlobalStyle />
      <Desktop>
        <TopPanelEdge />
        <Stage>
          <WaveWindow w={windows.left} />
          <WaveWindow w={windows.right} />
        </Stage>
        <TaskBar>
          <Grip />
          <TaskList>
            {tasks.map(([label, icon, active], i) => <TaskButton key={i} $active={active}>{icon}{label}</TaskButton>)}
          </TaskList>
          <Pager>
            <PagerDesk aria-label="Workspace 1">
              <PagerPart $behind><DveIcon /></PagerPart>
              <PagerPart><DveIcon /></PagerPart>
            </PagerDesk>
          </Pager>
          <ToolButton aria-label="Trash" $w={20}><TrashIcon /></ToolButton>
        </TaskBar>
        <ScreenEdge />
      </Desktop>
    </>
  );
}
